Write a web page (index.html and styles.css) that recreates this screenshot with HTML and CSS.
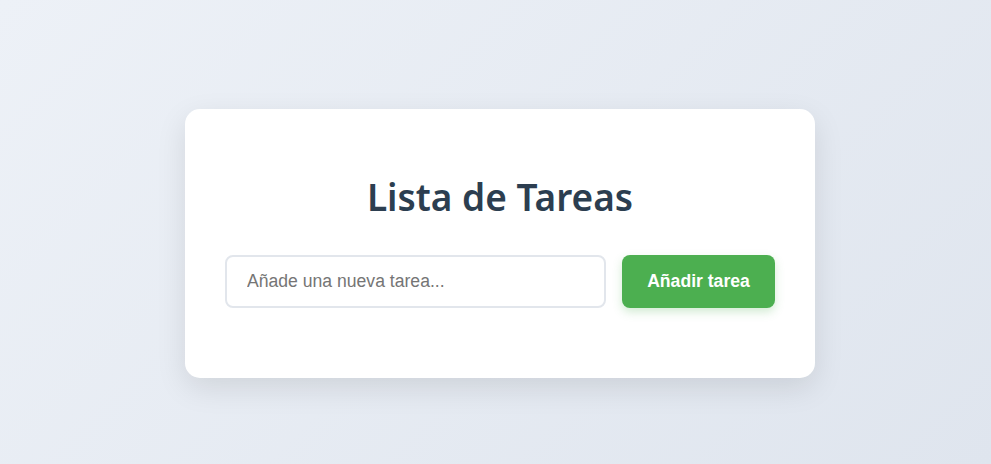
FILE: index.html
```html
<!DOCTYPE html>
<html lang="es">
  <head>
    <meta charset="UTF-8" />
    <meta name="viewport" content="width=device-width, initial-scale=1.0" />
    <title>Lista de Tareas</title>
    <link rel="stylesheet" href="styles.css">
  </head>
  <body>
    <div class="container">
      <h1>Lista de Tareas</h1>
      <form id="taskForm" class="task-form">
        <input type="text" id="taskInput" placeholder="Añade una nueva tarea..." />
        <button type="submit">Añadir tarea</button>
      </form>
      <ul id="taskList" class="task-list"></ul>
    </div>
  </body>
</html>
```

FILE: styles.css
```css
body {
  font-family: "Liberation Sans", Arial, sans-serif;
  background: linear-gradient(135deg, #edf1f7 0%, #dfe5ee 100%);
  display: flex;
  justify-content: center;
  align-items: center;
  height: 100vh;
  margin: 0;
  padding: 23px 0 0 9px;
  box-sizing: border-box;
}
.container {
  background-color: white;
  width: 550px;
  padding: 40px;
  border-radius: 15px;
  box-shadow: 0 10px 30px rgba(0, 0, 0, 0.1);
}
h1 {
  font-family: "Noto Sans", sans-serif;
  font-weight: 600;
  font-size: 37px;
  line-height: 1.2;
  text-align: center;
  color: #2c3e50;
  margin: 26px 0 35px;
}
.task-form {
  display: flex;
  gap: 16px;
}
.task-form input {
  flex: 1;
  height: 53px;
  box-sizing: border-box;
  padding: 0 20px;
  border: 2px solid #e2e6ec;
  border-radius: 8px;
  font-family: "Liberation Sans", Arial, sans-serif;
  font-size: 17.6px;
  color: #333;
  outline: none;
}
.task-form input::placeholder {
  color: #757575;
}
.task-form button {
  width: 153px;
  height: 53px;
  background-color: #4caf50;
  color: white;
  border: none;
  border-radius: 8px;
  font-family: "Liberation Sans", Arial, sans-serif;
  font-size: 17.6px;
  font-weight: bold;
  cursor: pointer;
  box-shadow: 0 4px 10px rgba(76, 175, 80, 0.25);
}
.task-list {
  list-style: none;
  padding: 0;
  margin: 30px 0 0;
}
```
